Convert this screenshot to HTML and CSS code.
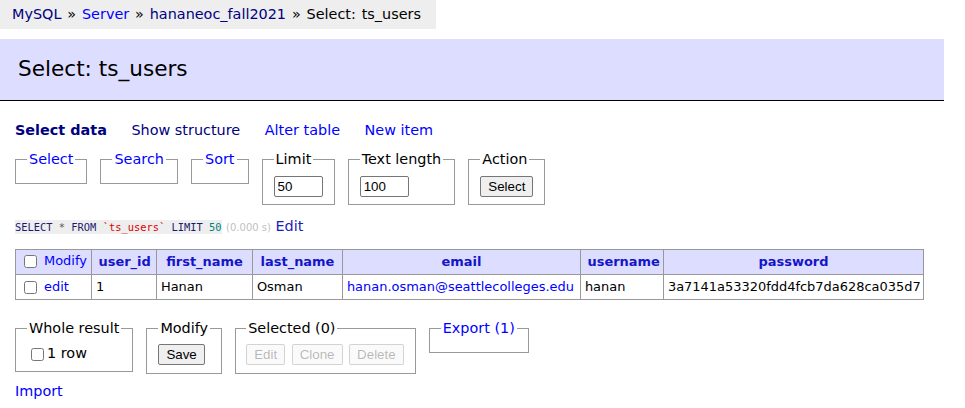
FILE: index.html
```html
<!DOCTYPE html>
<html lang="en">
<head>
<meta charset="utf-8">
<title>Select: ts_users - Adminer</title>
<link rel="stylesheet" href="styles.css">
</head>
<body>
<div class="page">
  <p class="breadcrumb"><a class="visited" href="#">MySQL</a> &raquo; <a href="#">Server</a> &raquo; <a class="visited" href="#">hananeoc_fall2021</a> &raquo; Select: ts_users</p>
  <div class="content">
    <h2>Select: ts_users</h2>
    <p class="links"><a class="active visited" href="#">Select data</a> <a class="visited" href="#">Show structure</a> <a href="#">Alter table</a> <a href="#">New item</a></p>
    <form class="filters">
      <fieldset class="empty"><legend><a href="#">Select</a></legend></fieldset>
      <fieldset class="empty"><legend><a href="#">Search</a></legend></fieldset>
      <fieldset class="empty"><legend><a href="#">Sort</a></legend></fieldset>
      <fieldset><legend>Limit</legend><div><input class="size" type="text" value="50"></div></fieldset>
      <fieldset><legend>Text length</legend><div><input class="size" type="text" value="100"></div></fieldset>
      <fieldset><legend>Action</legend><div><button class="btn" type="button">Select</button></div></fieldset>
    </form>
    <p class="sql"><code class="jush"><span class="kw">SELECT</span> <span class="op">*</span> <span class="kw">FROM</span> <span class="bac">`ts_users`</span> <span class="kw">LIMIT</span> <span class="num">50</span></code> <span class="time">(0.000 s)</span> <a class="edit-link" href="#">Edit</a></p>
    <table class="data">
      <colgroup>
        <col class="c-mod"><col class="c-id"><col class="c-first"><col class="c-last"><col class="c-email"><col class="c-user"><col class="c-pass">
      </colgroup>
      <thead>
        <tr>
          <td class="first"><input type="checkbox"> <a href="#">Modify</a></td>
          <th><a href="#">user_id</a></th>
          <th><a href="#">first_name</a></th>
          <th><a href="#">last_name</a></th>
          <th><a href="#">email</a></th>
          <th><a href="#">username</a></th>
          <th><a href="#">password</a></th>
        </tr>
      </thead>
      <tbody>
        <tr>
          <td class="first"><input type="checkbox"> <a href="#">edit</a></td>
          <td>1</td>
          <td>Hanan</td>
          <td>Osman</td>
          <td><a href="#">hanan.osman@seattlecolleges.edu</a></td>
          <td>hanan</td>
          <td>3a7141a53320fdd4fcb7da628ca035d7</td>
        </tr>
      </tbody>
    </table>
    <div class="footer">
      <fieldset><legend>Whole result</legend><label class="row-check"><input type="checkbox">1 row</label></fieldset>
      <fieldset><legend>Modify</legend><div><button class="btn" type="button">Save</button></div></fieldset>
      <fieldset class="selected"><legend>Selected (0)</legend><div class="btn-row"><button class="btn" type="button" disabled>Edit</button> <button class="btn" type="button" disabled>Clone</button> <button class="btn" type="button" disabled>Delete</button></div></fieldset>
      <fieldset class="empty"><legend><a href="#">Export (1)</a></legend></fieldset>
    </div>
    <div class="import"><a href="#">Import</a></div>
  </div>
</div>
</body>
</html>
```
FILE: styles.css
```css
html, body {
  margin: 0;
  background: #fff;
}
body {
  color: #000;
  font: 14.4px/1.25 "DejaVu Sans", Verdana, sans-serif;
}
a {
  color: #00f;
  text-decoration: none;
}
a.visited {
  color: navy;
}
.page {
  width: fit-content;
}
.breadcrumb {
  margin: 0;
  display: inline-block;
  white-space: nowrap;
  background: #eee;
  height: 29px;
  line-height: 28px;
  padding: 0 15px 0 12px;
  word-spacing: 1.3px;
}
.content {
  padding: 10px 0 0 15px;
}
h2 {
  font-size: 21.6px;
  font-weight: normal;
  line-height: 1.25;
  margin: 0 0 20px -15px;
  padding: 17px 18px;
  background: #ddf;
  border-bottom: 1px solid #000;
  color: #000;
}
.links {
  margin: 20px 20px 0 0;
}
.links a {
  margin-right: 20px;
  white-space: nowrap;
}
.active {
  font-weight: bold;
}
form {
  margin: 0;
}
fieldset {
  display: inline-block;
  vertical-align: top;
  padding: 7.2px 11px;
  margin: 11.5px 8.5px 0 0;
  border: 1px solid #999;
  min-inline-size: 0;
}
fieldset.selected {
  padding-left: 10px;
}
legend {
  padding: 0 2px;
}
fieldset > div {
  line-height: 18px;
}
.size {
  box-sizing: border-box;
  width: 49px;
  height: 21px;
  padding: 1px 3px;
  border: 1px solid #767676;
  border-radius: 2px;
  font: 13.33px "Liberation Sans", Arial, sans-serif;
  color: #000;
  vertical-align: middle;
  margin: 0;
}
.btn {
  font: 13.33px "Liberation Sans", Arial, sans-serif;
  color: #000;
  background: #efefef;
  border: 1px solid #767676;
  border-radius: 2px;
  padding: 1px 7px;
  height: 21px;
  vertical-align: middle;
  margin: 0;
}
.btn:disabled {
  color: rgba(16, 16, 16, 0.3);
  background: rgba(239, 239, 239, 0.3);
  border-color: rgba(118, 118, 118, 0.3);
}
.btn-row .btn + .btn {
  margin-left: 2px;
}
.sql {
  margin: 12.5px 20px 0 0;
}
.jush {
  font: 10.4px "DejaVu Sans Mono", monospace;
  background: #eee;
  color: #000;
  padding: 1px 0;
}
.kw {
  color: #1a1a6e;
}
.op {
  color: #555;
}
.bac {
  color: #d00;
}
.num {
  color: #007f7f;
}
.time {
  color: silver;
  font-size: 10px;
}
.edit-link {
  color: #1d1dbb;
}
table.data {
  margin: 13.5px 20px 0 0;
  border-collapse: collapse;
  table-layout: fixed;
  width: 909px;
  font-size: 12.96px;
  white-space: nowrap;
}
.c-mod { width: 76px; }
.c-id { width: 65px; }
.c-first { width: 96px; }
.c-last { width: 90px; }
.c-email { width: 238px; }
.c-user { width: 83px; }
.c-pass { width: 260px; }
.data td, .data th {
  border: 1px solid #999;
  padding: 2.6px 3.9px;
  text-align: left;
  overflow: hidden;
}
.data thead td, .data thead th {
  background: #ddf;
}
.data thead th {
  text-align: center;
  padding: 2.6px 6.5px;
  font-weight: bold;
}
.data thead th a {
  color: #1515c8;
}
.data input[type="checkbox"] {
  margin: 3px 3px 3px 4px;
  vertical-align: middle;
}
.footer {
  margin-top: 19px;
  padding-bottom: 8px;
}
.footer fieldset {
  margin-top: 0;
}
.row-check input {
  margin: 3px 3px 3px 4px;
  vertical-align: middle;
}
.import {
  line-height: 18px;
}
```
